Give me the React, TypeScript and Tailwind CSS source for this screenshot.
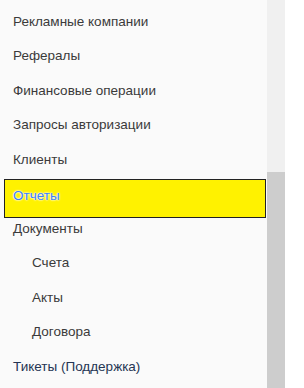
const items: { label: string; sub?: boolean; active?: boolean; blue?: boolean }[] = [
  { label: "Рекламные компании" },
  { label: "Рефералы" },
  { label: "Финансовые операции" },
  { label: "Запросы авторизации" },
  { label: "Клиенты" },
  { label: "Отчеты", active: true },
  { label: "Документы" },
  { label: "Счета", sub: true },
  { label: "Акты", sub: true },
  { label: "Договора", sub: true },
  { label: "Тикеты (Поддержка)", blue: true },
];

export default function App() {
  return (
    <div className="flex w-[304px] h-[388px] bg-white overflow-hidden font-['Liberation_Sans',Arial,sans-serif] text-[13.5px]">
      <nav className="w-[267px] h-full bg-[#fafafa] pt-[4.75px] flex flex-col">
        {items.map((item) =>
          item.active ? (
            <div
              key={item.label}
              className="mt-[1.75px] mb-[-6.25px] ml-[4px] w-[262px] h-[39px] shrink-0 flex items-center pb-[5px] pl-[8px] bg-[#fff200] border border-[#222]"
            >
              <span className="text-[#3d7ef5] [text-shadow:0_0_2px_#fff,0_0_2px_#fff,0_0_1px_#fff]">
                {item.label}
              </span>
            </div>
          ) : (
            <div
              key={item.label}
              className={`h-[34.5px] shrink-0 flex items-center ${
                item.sub ? "pl-[32px]" : "pl-[13px]"
              } ${item.blue ? "text-[#253553]" : "text-[#3a3a3a]"}`}
            >
              {item.label}
            </div>
          )
        )}
      </nav>
      {/* scrollbar */}
      <div className="w-[18px] h-full flex flex-col">
        <div className="h-[172px] bg-[#f0f0f0]" />
        <div className="flex-1 bg-[#cdcdcd]" />
      </div>
    </div>
  );
}
